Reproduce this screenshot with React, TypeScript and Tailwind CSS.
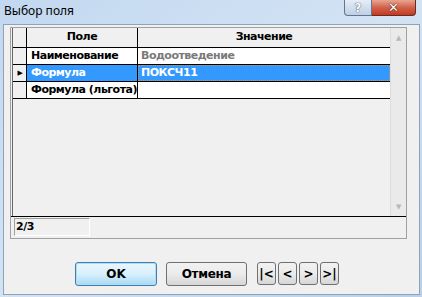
import React from 'react'

const rows = [
  { field: 'Наименование', value: 'Водоотведение', muted: true },
  { field: 'Формула', value: 'ПОКСЧ11', selected: true },
  { field: 'Формула (льгота)', value: '' },
]

function NavButton({ label }: { label: string }) {
  return (
    <button className="w-[19px] h-[23px] rounded-[3px] border border-[#707070] bg-gradient-to-b from-[#f2f2f2] via-[#ebebeb] to-[#d6d6d6] text-[12px] font-bold text-black leading-none">
      {label}
    </button>
  )
}

export default function App() {
  return (
    <div className="w-[422px] h-[297px] flex flex-col bg-gradient-to-br from-[#c2d8f0] via-[#d3e3f4] to-[#b9d0ea] font-['DejaVu_Sans',sans-serif] overflow-hidden">
      {/* title bar */}
      <div className="h-[24px] flex items-start justify-between shrink-0">
        <span className="pl-[4px] pt-[3px] text-[12px] leading-[15px] text-black font-['Noto_Sans',sans-serif]">
          Выбор поля
        </span>
        <div className="flex mr-[6px]">
          <div className="w-[28px] h-[16px] rounded-bl-[4px] border border-t-0 border-[#5f7591] bg-gradient-to-b from-[#e6eef7] to-[#bfcfe3] flex items-center justify-center text-[12px] font-bold text-white [text-shadow:0_0_1px_#3a4c66,0_0_1px_#3a4c66]">
            ?
          </div>
          <div className="w-[44px] h-[16px] rounded-br-[4px] border border-t-0 border-l-0 border-[#6a2a1f] bg-gradient-to-b from-[#e7a593] via-[#d2604a] to-[#c23a21] flex items-center justify-center text-[13px] font-bold text-white [text-shadow:0_0_1px_#3b1008,0_0_1px_#3b1008]">
            ✕
          </div>
        </div>
      </div>

      {/* client area */}
      <div className="flex-1 ml-[3px] mr-[2px] mb-[2px] border border-[#8ea2ba] bg-[#f0f0f0] flex flex-col">
        <div className="ml-[6px] mt-[2px] w-[397px] h-[212px] border border-[#a0a0a0] flex flex-col text-[11px] font-bold tracking-[-0.5px] whitespace-nowrap">
          <div className="h-[189px] flex border-b border-black">
            {/* columns */}
            <div className="w-[378px] flex flex-col ml-[1px] border-l border-[#696969]">
              <div className="h-[20px] flex border-b border-black bg-[#f0f0f0]">
                <div className="w-[14px] border-r border-black" />
                <div className="w-[111px] border-r border-black flex items-center justify-center">Поле</div>
                <div className="flex-1 flex items-center justify-center">Значение</div>
              </div>
              {rows.map((r) => (
                <div key={r.field} className="h-[17px] flex border-b border-black">
                  <div className="w-[14px] border-r border-black bg-[#f0f0f0] flex items-center justify-center">
                    {r.selected && <span className="text-[7px] leading-none pl-[1px]">▶</span>}
                  </div>
                  <div
                    className={`w-[111px] border-r border-black flex items-center pl-[4px] overflow-hidden ${
                      r.selected ? 'bg-[#3399ff] text-white' : 'bg-white text-black'
                    }`}
                  >
                    {r.field}
                  </div>
                  <div
                    className={`flex-1 flex items-center pl-[3px] ${
                      r.selected
                        ? 'bg-[#3399ff] text-white outline-1 outline-dotted outline-offset-[-1px] outline-[#c8925a]'
                        : r.muted
                          ? 'bg-white text-[#7a7a7a]'
                          : 'bg-white'
                    }`}
                  >
                    {r.value}
                  </div>
                </div>
              ))}
            </div>
            {/* scrollbar */}
            <div className="flex-1 bg-[#eaeaea] border-l border-[#dcdcdc] flex flex-col items-center justify-between pt-[7px] pb-[5px] text-[#b8b8b8]">
              <span className="text-[7px] leading-none">▲</span>
              <span className="text-[7px] leading-none">▼</span>
            </div>
          </div>
          {/* status */}
          <div className="flex-1 flex items-start pl-[3px] pt-[1px]">
            <div className="w-[76px] h-[18px] border-t border-l border-[#a0a0a0] border-r border-b border-r-white border-b-white flex items-center pl-[1px] text-black">
              2/3
            </div>
          </div>
        </div>

        {/* buttons */}
        <div className="flex items-start mt-[23px] ml-[71px]">
          <button className="w-[82px] h-[24px] rounded-[3px] border border-[#3c7fb1] bg-gradient-to-b from-[#eaf6fd] via-[#d9f0fc] to-[#a7d9f5] shadow-[inset_0_0_0_1px_#b0dcf7] text-[12px] font-bold text-black">
            OK
          </button>
          <button className="ml-[9px] w-[81px] h-[24px] rounded-[3px] border border-[#707070] bg-gradient-to-b from-[#f2f2f2] via-[#ebebeb] to-[#d6d6d6] text-[12px] font-bold text-black tracking-[-0.3px]">
            Отмена
          </button>
          <div className="ml-[10px] flex gap-[2px]">
            <NavButton label="|<" />
            <NavButton label="<" />
            <NavButton label=">" />
            <NavButton label=">|" />
          </div>
        </div>
      </div>
    </div>
  )
}
